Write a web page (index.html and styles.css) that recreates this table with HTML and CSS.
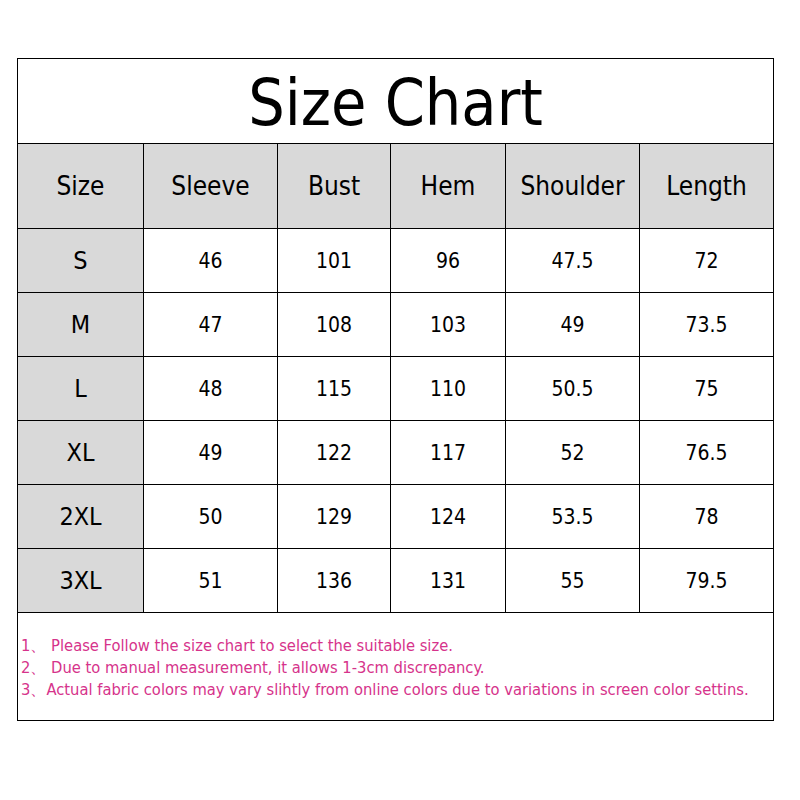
FILE: index.html
```html
<!DOCTYPE html>
<html>
<head>
<meta charset="utf-8">
<link rel="stylesheet" href="styles.css">
</head>
<body>
<div class="chart">
  <div class="title">Size Chart</div>
  <div class="head size-col">Size</div>
  <div class="head">Sleeve</div>
  <div class="head">Bust</div>
  <div class="head">Hem</div>
  <div class="head">Shoulder</div>
  <div class="head">Length</div>

  <div class="cell size-col">S</div><div class="cell">46</div><div class="cell">101</div><div class="cell">96</div><div class="cell">47.5</div><div class="cell">72</div>
  <div class="cell size-col">M</div><div class="cell">47</div><div class="cell">108</div><div class="cell">103</div><div class="cell">49</div><div class="cell">73.5</div>
  <div class="cell size-col">L</div><div class="cell">48</div><div class="cell">115</div><div class="cell">110</div><div class="cell">50.5</div><div class="cell">75</div>
  <div class="cell size-col">XL</div><div class="cell">49</div><div class="cell">122</div><div class="cell">117</div><div class="cell">52</div><div class="cell">76.5</div>
  <div class="cell size-col">2XL</div><div class="cell">50</div><div class="cell">129</div><div class="cell">124</div><div class="cell">53.5</div><div class="cell">78</div>
  <div class="cell size-col">3XL</div><div class="cell">51</div><div class="cell">136</div><div class="cell">131</div><div class="cell">55</div><div class="cell">79.5</div>

  <div class="notes">
    <p>1、 Please Follow the size chart to select the suitable size.</p>
    <p>2、 Due to manual measurement, it allows 1-3cm discrepancy.</p>
    <p>3、Actual fabric colors may vary slihtly from online colors due to variations in screen color settins.</p>
  </div>
</div>
</body>
</html>
```

FILE: styles.css
```css
html, body {
  margin: 0;
  padding: 0;
  background: #fff;
}
body {
  font-family: "DejaVu Sans Condensed", "DejaVu Sans", sans-serif;
  font-stretch: condensed;
  color: #000;
}
.chart {
  margin: 58px 0 0 17px;
  width: 755px;
  border: 1px solid #000;
  display: grid;
  grid-template-columns: 125px 133px 112px 114px 133px 133px;
  grid-template-rows: 84px 84px repeat(6, 63px) 107px;
  gap: 1px;
  background: #000;
}
.title {
  grid-column: 1 / -1;
  background: #fff;
  display: flex;
  align-items: center;
  justify-content: center;
  font-size: 64px;
  padding-top: 3px;
}
.head {
  background: #d9d9d9;
  display: flex;
  align-items: center;
  justify-content: center;
  font-size: 26px;
}
.cell {
  background: #fff;
  display: flex;
  align-items: center;
  justify-content: center;
  font-size: 21px;
}
.cell.size-col {
  background: #d9d9d9;
  font-size: 25px;
}
.notes {
  grid-column: 1 / -1;
  background: #fff;
  display: flex;
  flex-direction: column;
  justify-content: center;
  padding-left: 3px;
  padding-top: 2px;
  color: #d6338b;
  font-size: 16.4px;
}
.notes p {
  margin: 0;
  line-height: 22px;
}
```
